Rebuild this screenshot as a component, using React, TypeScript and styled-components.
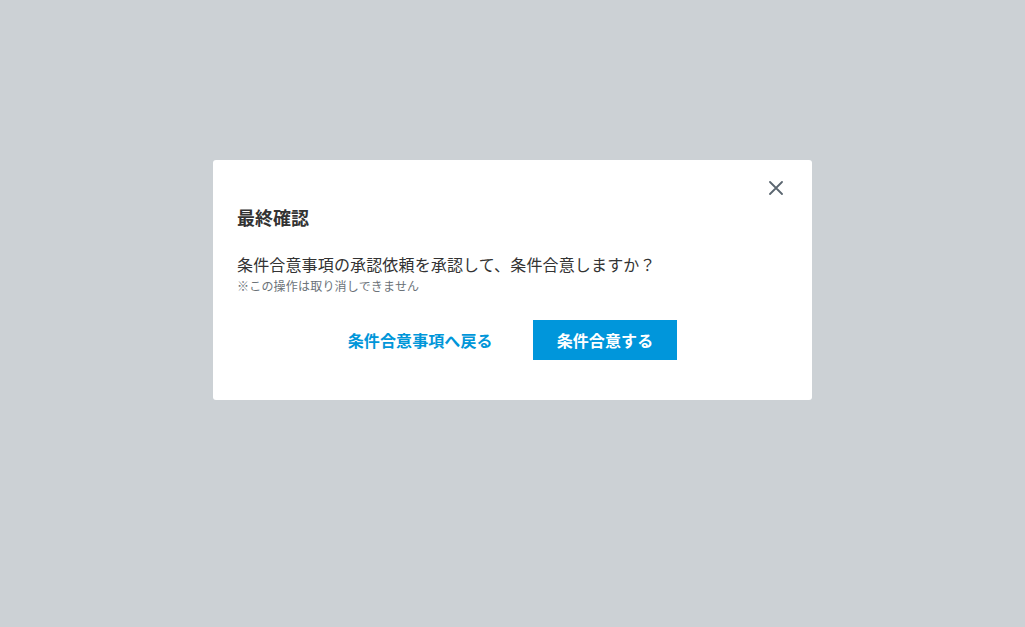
import styled, { createGlobalStyle } from 'styled-components';

const GlobalStyle = createGlobalStyle`
    html, body {
        margin: 0;
        padding: 0;
        height: 100%;
    }
    body {
        font-family: "Noto Sans CJK JP", "Noto Sans", sans-serif;
        background-color: #ccd1d5;
    }
    #root {
        height: 100%;
    }
`;

const Overlay = styled.div`
    height: 100vh;
    width: 100vw;
    display: flex;
    justify-content: center;
    align-items: flex-start;
    padding-top: 160px;
    box-sizing: border-box;
    background-color: #ccd1d5;
`;

const Dialog = styled.div`
    position: relative;
    width: 599px;
    box-sizing: border-box;
    padding: 44px 24px 40px;
    background-color: #fff;
    border-radius: 3px;
    color: #333;
`;

const CloseButton = styled.button`
    position: absolute;
    top: 16px;
    right: 24px;
    width: 24px;
    height: 24px;
    padding: 0;
    border: none;
    background: none;
    display: flex;
    align-items: center;
    justify-content: center;
    cursor: pointer;
`;

const Title = styled.h2`
    margin: 0;
    font-size: 18px;
    line-height: 27px;
    font-weight: 700;
`;

const Message = styled.p`
    margin: 21px 0 0;
    font-size: 16px;
    line-height: 24px;
    letter-spacing: 0.15px;
`;

const Note = styled.p`
    margin: 1px 0 0;
    font-size: 12px;
    line-height: 18px;
    letter-spacing: 0.2px;
    color: #6b7278;
`;

const Actions = styled.div`
    margin-top: 25px;
    padding-right: 16px;
    display: flex;
    justify-content: center;
    align-items: center;
    gap: 24px;
`;

const Button = styled.button<{ $primary?: boolean }>`
    height: 40px;
    padding: 0 ${p => (p.$primary ? '24px' : '16px')};
    border: none;
    border-radius: 0;
    font-family: inherit;
    font-size: 16px;
    font-weight: 700;
    letter-spacing: 0.1px;
    cursor: pointer;
    color: ${p => (p.$primary ? '#fff' : '#0096d9')};
    background-color: ${p => (p.$primary ? '#0096db' : 'transparent')};
`;

export default function App() {
    return (
        <>
            <GlobalStyle />
            <Overlay>
                <Dialog role='dialog'>
                    <CloseButton aria-label='閉じる'>
                        <svg width='14' height='14' viewBox='0 0 14 14'>
                            <path
                                d='M1 1 L13 13 M13 1 L1 13'
                                stroke='#5b6670'
                                strokeWidth='1.8'
                                strokeLinecap='round'
                            />
                        </svg>
                    </CloseButton>
                    <Title>最終確認</Title>
                    <Message>
                        条件合意事項の承認依頼を承認して、条件合意しますか？
                    </Message>
                    <Note>※この操作は取り消しできません</Note>
                    <Actions>
                        <Button>条件合意事項へ戻る</Button>
                        <Button $primary>条件合意する</Button>
                    </Actions>
                </Dialog>
            </Overlay>
        </>
    );
}
